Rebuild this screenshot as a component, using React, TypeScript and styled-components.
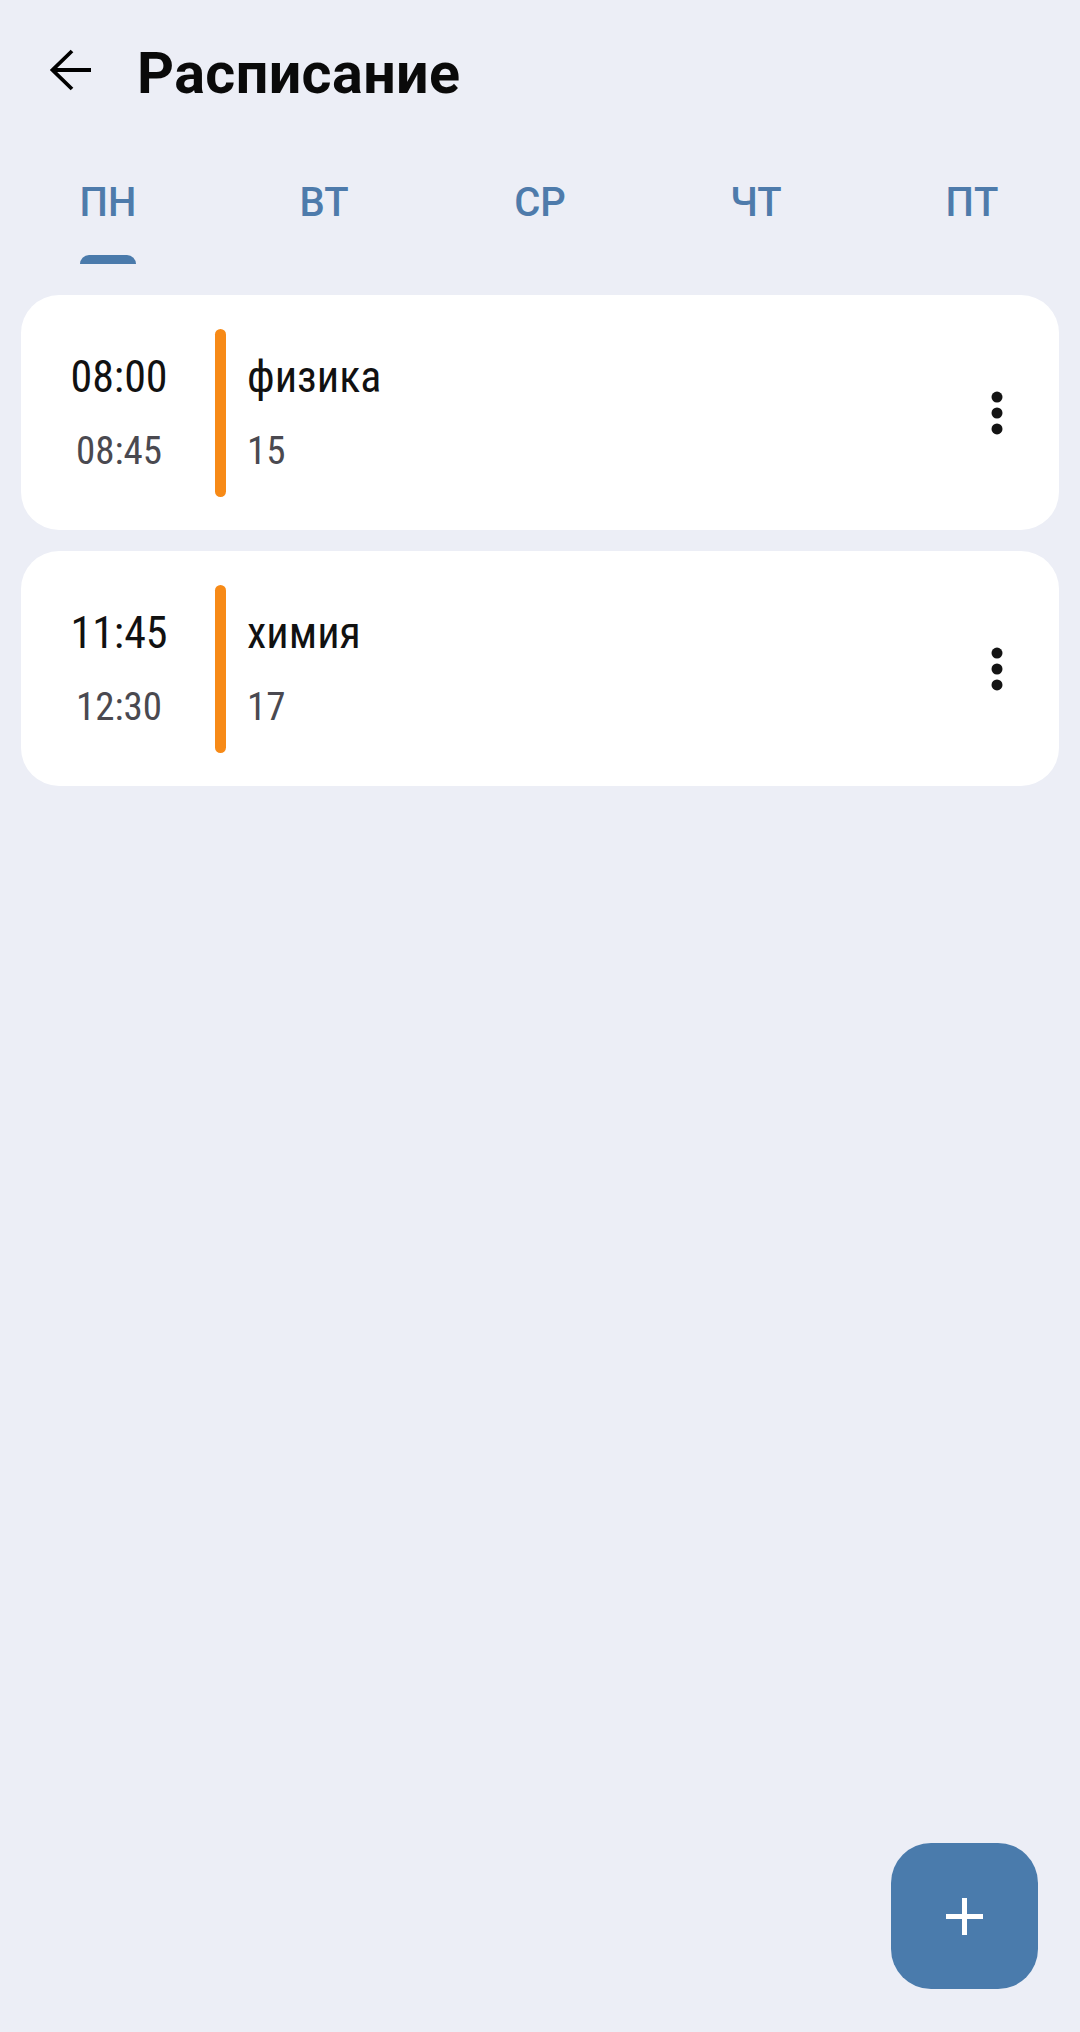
import React from "react";
import styled, { createGlobalStyle } from "styled-components";

const GlobalStyle = createGlobalStyle`
  html, body {
    margin: 0;
    padding: 0;
    background: #eceef6;
  }
  body {
    font-family: Roboto, "Noto Sans", sans-serif;
    -webkit-font-smoothing: antialiased;
  }
  * { box-sizing: border-box; }
`;

const CONDENSED = `"Roboto Condensed", "Liberation Sans Narrow", "Arial Narrow", Roboto, sans-serif`;

const Page = styled.div`
  position: relative;
  width: 1080px;
  min-height: 2032px;
  background: #eceef6;
`;

const Header = styled.header`
  display: flex;
  align-items: center;
  height: 140px;
  padding-left: 37px;
`;

const BackButton = styled.button`
  width: 66px;
  height: 66px;
  border: 0;
  padding: 0;
  background: transparent;
  display: flex;
  align-items: center;
  justify-content: center;
  color: #000;
`;

const Title = styled.h1`
  margin: 0 0 0 34px;
  padding-top: 6px;
  font-family: Roboto, sans-serif;
  font-weight: 700;
  font-size: 57.5px;
  color: #0a0a0a;
  letter-spacing: 0.4px;
`;

const TabBar = styled.nav`
  display: flex;
  height: 124px;
`;

const Tab = styled.div`
  flex: 1;
  display: flex;
  justify-content: center;
  padding-top: 39px;
`;

const TabInner = styled.div`
  display: inline-flex;
  flex-direction: column;
  align-items: stretch;
`;

const TabLabel = styled.span`
  font-family: Roboto, sans-serif;
  font-weight: 500;
  font-size: 40px;
  line-height: 48px;
  color: #4e7bab;
  text-align: center;
`;

const Indicator = styled.div<{ $active: boolean }>`
  margin-top: 28px;
  height: 9px;
  border-radius: 9px 9px 0 0;
  background: ${(p) => (p.$active ? "#4a7aab" : "transparent")};
`;

const List = styled.main`
  display: flex;
  flex-direction: column;
  gap: 21px;
  padding: 31px 21px 0;
`;

const Card = styled.article`
  display: flex;
  align-items: center;
  height: 235px;
  background: #ffffff;
  border-radius: 38px;
`;

const TimeCol = styled.div`
  width: 154px;
  margin-left: 21px;
  display: flex;
  flex-direction: column;
  align-items: center;
`;

const StartTime = styled.span`
  font-family: ${CONDENSED};
  font-size: 44px;
  line-height: 58px;
  color: #111111;
`;

const EndTime = styled.span`
  margin-top: 19px;
  font-family: ${CONDENSED};
  font-size: 39px;
  line-height: 52px;
  color: #4a4950;
`;

const Bar = styled.div<{ $color: string }>`
  width: 11px;
  height: 168px;
  margin-left: 19px;
  border-radius: 6px;
  background: ${(p) => p.$color};
`;

const InfoCol = styled.div`
  flex: 1;
  margin-left: 21px;
  display: flex;
  flex-direction: column;
  align-items: flex-start;
`;

const Subject = styled.span`
  font-family: ${CONDENSED};
  font-size: 44px;
  line-height: 58px;
  color: #111111;
`;

const Room = styled.span`
  margin-top: 19px;
  font-family: ${CONDENSED};
  font-size: 39px;
  line-height: 52px;
  color: #4a4950;
`;

const MenuButton = styled.button`
  width: 66px;
  height: 66px;
  margin-right: 29px;
  border: 0;
  padding: 0;
  background: transparent;
  display: flex;
  align-items: center;
  justify-content: center;
`;

const Fab = styled.button`
  position: absolute;
  right: 42px;
  bottom: 43px;
  width: 147px;
  height: 146px;
  border: 0;
  padding: 0;
  border-radius: 40px;
  background: #4a7bac;
  display: flex;
  align-items: center;
  justify-content: center;
`;

const BackIcon = () => (
  <svg width="44" height="44" viewBox="0 0 44 44" fill="none">
    <path
      d="M24 3 L4.5 22 L24 41 M4.5 22 H43"
      stroke="#000"
      strokeWidth="3.8"
      strokeLinecap="butt"
      strokeLinejoin="miter"
    />
  </svg>
);

const MoreIcon = () => (
  <svg width="66" height="66" viewBox="0 0 24 24" fill="#141414">
    <circle cx="12" cy="6.2" r="2" />
    <circle cx="12" cy="12" r="2" />
    <circle cx="12" cy="17.8" r="2" />
  </svg>
);

const PlusIcon = () => (
  <svg width="37" height="37" viewBox="0 0 37 37" fill="none">
    <path d="M18.5 0 V37 M0 18.5 H37" stroke="#fff" strokeWidth="5" />
  </svg>
);

type Lesson = {
  start: string;
  end: string;
  subject: string;
  room: string;
  color: string;
};

const days = ["ПН", "ВТ", "СР", "ЧТ", "ПТ"];

const lessons: Lesson[] = [
  { start: "08:00", end: "08:45", subject: "физика", room: "15", color: "#f78a17" },
  { start: "11:45", end: "12:30", subject: "химия", room: "17", color: "#f78a17" },
];

export default function App() {
  const active = 0;
  return (
    <Page>
      <GlobalStyle />
      <Header>
        <BackButton aria-label="Назад">
          <BackIcon />
        </BackButton>
        <Title>Расписание</Title>
      </Header>
      <TabBar>
        {days.map((d, i) => (
          <Tab key={d}>
            <TabInner>
              <TabLabel>{d}</TabLabel>
              <Indicator $active={i === active} />
            </TabInner>
          </Tab>
        ))}
      </TabBar>
      <List>
        {lessons.map((l) => (
          <Card key={l.start}>
            <TimeCol>
              <StartTime>{l.start}</StartTime>
              <EndTime>{l.end}</EndTime>
            </TimeCol>
            <Bar $color={l.color} />
            <InfoCol>
              <Subject>{l.subject}</Subject>
              <Room>{l.room}</Room>
            </InfoCol>
            <MenuButton aria-label="Меню">
              <MoreIcon />
            </MenuButton>
          </Card>
        ))}
      </List>
      <Fab aria-label="Добавить">
        <PlusIcon />
      </Fab>
    </Page>
  );
}
